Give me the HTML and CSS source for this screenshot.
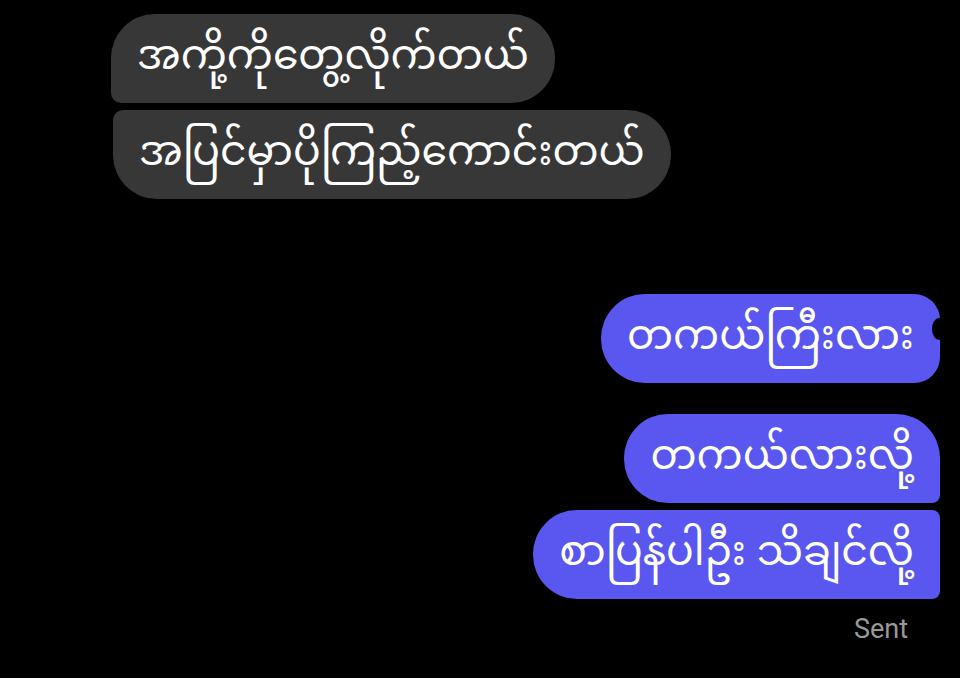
FILE: index.html
```html
<!DOCTYPE html>
<html lang="my">
<head>
  <meta charset="UTF-8">
  <title>Chat</title>
  <link rel="stylesheet" href="styles.css">
</head>
<body>
  <div class="thread">
    <!-- Received group -->
    <div class="group group--in">
      <div class="bubble bubble--in bubble--first">အကို့ကိုတွေ့လိုက်တယ်</div>
      <div class="bubble bubble--in bubble--last">အပြင်မှာပိုကြည့်ကောင်းတယ်</div>
    </div>

    <!-- Sent messages -->
    <div class="group group--out group--single">
      <div class="bubble bubble--out bubble--solo">တကယ်ကြီးလား<span class="notch"></span></div>
    </div>

    <div class="group group--out">
      <div class="bubble bubble--out bubble--first">တကယ်လားလို့</div>
      <div class="bubble bubble--out bubble--last">စာပြန်ပါဦး သိချင်လို့</div>
      <p class="status">Sent</p>
    </div>
  </div>
</body>
</html>
```

FILE: styles.css
```css
*, *:before,
*:after {
  box-sizing: border-box;
}

html {
  height: 100%;
  background: #000;
}

body {
  margin: 0;
  height: 100%;
  background: #000;
  color: #fff;
  font-family: "Noto Sans Myanmar", "Padauk", "Myanmar Text", "Noto Sans", sans-serif;
  overflow: hidden;
}

.thread {
  display: flex;
  flex-direction: column;
  padding: 14px 20px 0 111px;
}

.group {
  display: flex;
  flex-direction: column;
  gap: 7px;
}

.group--in {
  align-items: flex-start;
}

.group--out {
  align-items: flex-end;
}

.group--single {
  margin-top: 95px;
}

.group--out + .group--out {
  margin-top: 31px;
}

.bubble {
  position: relative;
  display: flex;
  align-items: center;
  height: 89px;
  padding: 2px 26px 0;
  font-size: 41px;
  line-height: 1;
  white-space: nowrap;
  border-radius: 44px;
}

.bubble--in {
  background: #373737;
}

.bubble--in.bubble--first {
  border-bottom-left-radius: 10px;
}

.bubble--in.bubble--last {
  border-top-left-radius: 10px;
  margin-left: 2px;
}

.bubble--out {
  background: #5a57f0;
}

.bubble--solo {
  border-radius: 44px 26px 26px 44px;
}

.bubble--out.bubble--first {
  border-bottom-right-radius: 8px;
}

.bubble--out.bubble--last {
  border-top-right-radius: 8px;
  border-bottom-right-radius: 8px;
}

.notch {
  position: absolute;
  right: -6px;
  top: 24px;
  width: 14px;
  height: 22px;
  border-radius: 50%;
  background: #000;
}

.status {
  margin: 7px 32px 0 0;
  font-family: Roboto, "Liberation Sans", sans-serif;
  font-size: 27px;
  color: #999;
}
```
